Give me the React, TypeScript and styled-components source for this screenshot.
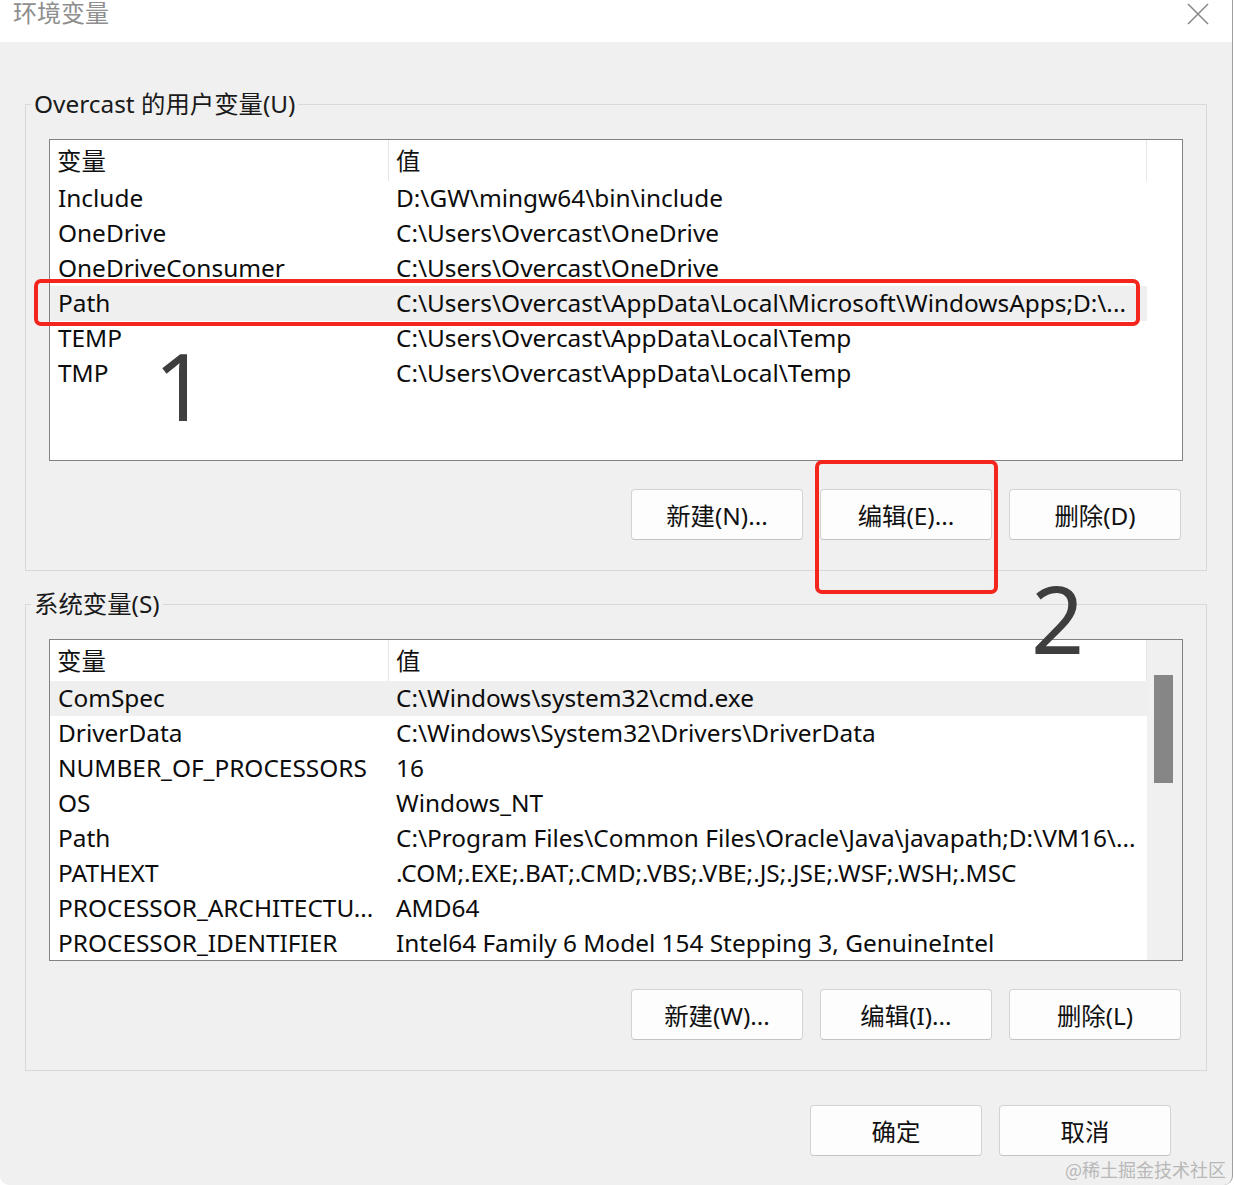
import React from "react";
import styled, { createGlobalStyle } from "styled-components";

const Global = createGlobalStyle`
  html, body { margin: 0; padding: 0; background: #ffffff; }
  body { font-family: "Noto Sans", "Noto Sans CJK SC", sans-serif; }
  * { box-sizing: border-box; }
`;

const Window = styled.div`
  position: relative;
  width: 1233px;
  height: 1185px;
  background: #f0f0f0;
  border-right: 1px solid #9e9e9e;
  border-radius: 0 0 9px 9px;
  overflow: hidden;
  display: flex;
  flex-direction: column;
  font-family: "Noto Sans", "Noto Sans CJK SC", sans-serif;
  color: #111;
`;

const TitleBar = styled.div`
  height: 42px;
  flex: none;
  background: #ffffff;
  display: flex;
  justify-content: space-between;
  align-items: flex-start;
  padding: 0 23px 0 13px;
`;

const Title = styled.div`
  font-size: 24px;
  line-height: 24px;
  margin-top: 0;
  color: #8e8e8e;
  font-family: "Noto Sans CJK SC", sans-serif;
`;

const CloseIcon = styled.svg`
  margin-top: 3px;
  width: 22px;
  height: 22px;
`;

const Body = styled.div`
  display: flex;
  flex-direction: column;
  padding: 46px 25px 0 25px;
`;

const GroupBox = styled.fieldset<{ $top?: number }>`
  margin: ${(p) => p.$top ?? 0}px 0 0 0;
  padding: 0 23px 30px 23px;
  border: 1px solid #d9d9d9;
  min-width: 0;
`;

const Legend = styled.legend`
  margin-left: -18px;
  padding: 0 3px;
  font-size: 24.4px;
  line-height: 32px;
  height: 32px;
  color: #1a1a1a;
`;

const ListBox = styled.div`
  margin-top: 19px;
  height: 322px;
  border: 1px solid #828282;
  background: #ffffff;
  display: flex;
  overflow: hidden;
`;

const Table = styled.div`
  width: 1097px;
  flex: none;
  display: flex;
  flex-direction: column;
`;

const HeaderRow = styled.div`
  height: 41px;
  flex: none;
  display: grid;
  grid-template-columns: 339px 1fr;
`;

const HeaderCell = styled.div<{ $pad: number }>`
  border-right: 1px solid #e6e6e6;
  padding: 1px 0 0 ${(p) => p.$pad}px;
  font-size: 24.4px;
  line-height: 39px;
  color: #111;
`;

const Row = styled.div<{ $selected?: boolean }>`
  height: 35px;
  flex: none;
  display: grid;
  grid-template-columns: 339px 1fr;
  background: ${(p) => (p.$selected ? "#efefef" : "transparent")};
`;

const Cell = styled.div<{ $pad: number }>`
  padding-left: ${(p) => p.$pad}px;
  font-size: 24.4px;
  line-height: 33px;
  white-space: nowrap;
  overflow: hidden;
  color: #0c0c0c;
`;

const ScrollTrack = styled.div`
  width: 35px;
  flex: none;
  background: #f0f0f0;
  padding: 35px 0 0 7px;
`;

const ScrollThumb = styled.div`
  width: 19px;
  height: 108px;
  background: #868686;
`;

const ButtonRow = styled.div<{ $top: number; $right: number }>`
  display: flex;
  justify-content: flex-end;
  gap: 17px;
  margin-top: ${(p) => p.$top}px;
  padding-right: ${(p) => p.$right}px;
`;

const Button = styled.button`
  width: 172px;
  height: 51px;
  background: #fdfdfd;
  border: 1px solid #d3d3d3;
  border-bottom-color: #c4c4c4;
  border-radius: 4px;
  font-family: "Noto Sans", "Noto Sans CJK SC", sans-serif;
  font-size: 24.4px;
  color: #111;
  padding: 0;
`;

const Footer = styled.div`
  display: flex;
  justify-content: flex-end;
  gap: 17px;
  margin-top: 34px;
  padding-right: 36px;
`;

const RedBox = styled.div<{ $l: number; $t: number; $w: number; $h: number }>`
  position: absolute;
  left: ${(p) => p.$l}px;
  top: ${(p) => p.$t}px;
  width: ${(p) => p.$w}px;
  height: ${(p) => p.$h}px;
  border: 4px solid #f4251c;
  border-radius: 7px;
  pointer-events: none;
`;

const BigNum = styled.div<{ $l: number; $t: number }>`
  position: absolute;
  left: ${(p) => p.$l}px;
  top: ${(p) => p.$t}px;
  font-family: "Noto Sans", sans-serif;
  font-size: 93px;
  line-height: 92px;
  color: #3e3e3e;
`;

const Watermark = styled.div`
  position: absolute;
  right: 6px;
  bottom: 5px;
  font-size: 18px;
  line-height: 22px;
  color: #b8b8b8;
  font-family: "Noto Sans CJK SC", sans-serif;
`;

type Item = [string, string];

const userVars: Item[] = [
  ["Include", "D:\\GW\\mingw64\\bin\\include"],
  ["OneDrive", "C:\\Users\\Overcast\\OneDrive"],
  ["OneDriveConsumer", "C:\\Users\\Overcast\\OneDrive"],
  ["Path", "C:\\Users\\Overcast\\AppData\\Local\\Microsoft\\WindowsApps;D:\\..."],
  ["TEMP", "C:\\Users\\Overcast\\AppData\\Local\\Temp"],
  ["TMP", "C:\\Users\\Overcast\\AppData\\Local\\Temp"],
];

const sysVars: Item[] = [
  ["ComSpec", "C:\\Windows\\system32\\cmd.exe"],
  ["DriverData", "C:\\Windows\\System32\\Drivers\\DriverData"],
  ["NUMBER_OF_PROCESSORS", "16"],
  ["OS", "Windows_NT"],
  ["Path", "C:\\Program Files\\Common Files\\Oracle\\Java\\javapath;D:\\VM16\\..."],
  ["PATHEXT", ".COM;.EXE;.BAT;.CMD;.VBS;.VBE;.JS;.JSE;.WSF;.WSH;.MSC"],
  ["PROCESSOR_ARCHITECTU...", "AMD64"],
  ["PROCESSOR_IDENTIFIER", "Intel64 Family 6 Model 154 Stepping 3, GenuineIntel"],
];

function VarList({ items, selected, scroll }: { items: Item[]; selected: number; scroll?: boolean }) {
  return (
    <ListBox>
      <Table>
        <HeaderRow>
          <HeaderCell $pad={7}>变量</HeaderCell>
          <HeaderCell $pad={7}>值</HeaderCell>
        </HeaderRow>
        {items.map(([k, v], i) => (
          <Row key={k + i} $selected={i === selected}>
            <Cell $pad={8}>{k}</Cell>
            <Cell $pad={7}>{v}</Cell>
          </Row>
        ))}
      </Table>
      {scroll && (
        <ScrollTrack>
          <ScrollThumb />
        </ScrollTrack>
      )}
    </ListBox>
  );
}

export default function App() {
  return (
    <>
      <Global />
      <Window>
        <TitleBar>
          <Title>环境变量</Title>
          <CloseIcon viewBox="0 0 22 22">
            <path d="M1 1 L21 21 M21 1 L1 21" stroke="#8a8a8a" strokeWidth="1.6" fill="none" />
          </CloseIcon>
        </TitleBar>
        <Body>
          <GroupBox>
            <Legend>Overcast 的用户变量(U)</Legend>
            <VarList items={userVars} selected={3} />
            <ButtonRow $top={28} $right={2}>
              <Button>新建(N)...</Button>
              <Button>编辑(E)...</Button>
              <Button>删除(D)</Button>
            </ButtonRow>
          </GroupBox>
          <GroupBox $top={17}>
            <Legend>系统变量(S)</Legend>
            <VarList items={sysVars} selected={0} scroll />
            <ButtonRow $top={28} $right={2}>
              <Button>新建(W)...</Button>
              <Button>编辑(I)...</Button>
              <Button>删除(L)</Button>
            </ButtonRow>
          </GroupBox>
          <Footer>
            <Button>确定</Button>
            <Button>取消</Button>
          </Footer>
        </Body>
        <RedBox $l={34} $t={279} $w={1106} $h={47} />
        <RedBox $l={815} $t={460} $w={183} $h={134} />
        <BigNum $l={154} $t={339}>1</BigNum>
        <BigNum $l={1031} $t={572}>2</BigNum>
        <Watermark>@稀土掘金技术社区</Watermark>
      </Window>
    </>
  );
}
